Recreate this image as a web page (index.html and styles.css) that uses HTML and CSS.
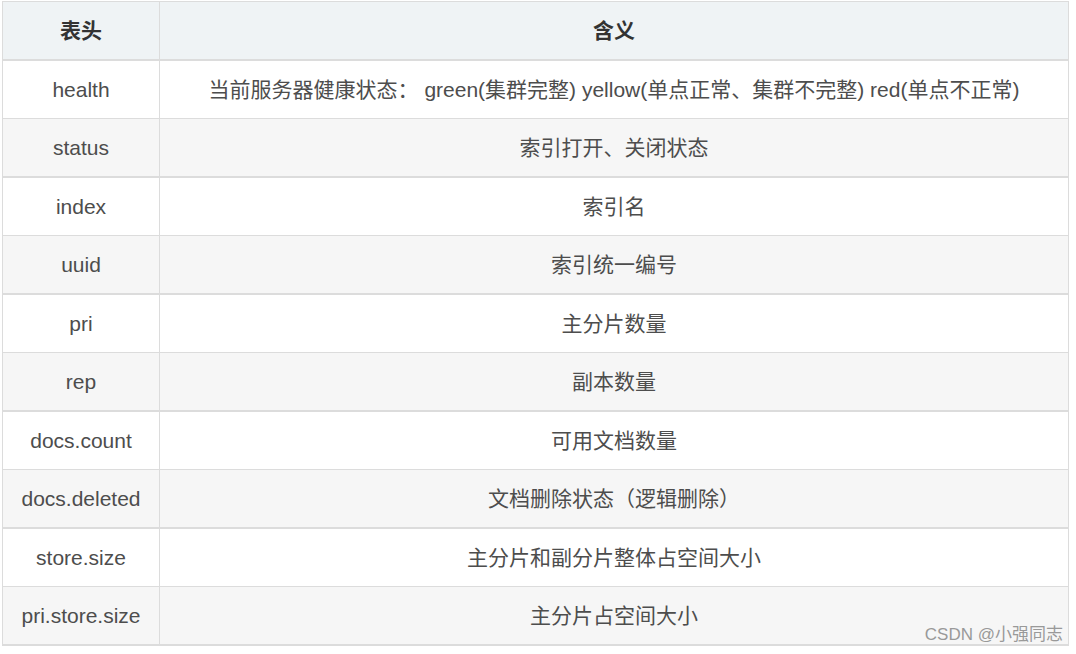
FILE: index.html
```html
<!DOCTYPE html>
<html lang="zh-CN">
<head>
<meta charset="utf-8">
<title>索引字段说明</title>
<link rel="stylesheet" href="styles.css">
</head>
<body>
<div class="page">
  <table class="spec">
    <thead>
      <tr><th class="c-key">表头</th><th class="c-val">含义</th></tr>
    </thead>
    <tbody>
      <tr><td>health</td><td>当前服务器健康状态： green(集群完整) yellow(单点正常、集群不完整) red(单点不正常)</td></tr>
      <tr><td>status</td><td>索引打开、关闭状态</td></tr>
      <tr><td>index</td><td>索引名</td></tr>
      <tr><td>uuid</td><td>索引统一编号</td></tr>
      <tr><td>pri</td><td>主分片数量</td></tr>
      <tr><td>rep</td><td>副本数量</td></tr>
      <tr><td>docs.count</td><td>可用文档数量</td></tr>
      <tr><td>docs.deleted</td><td>文档删除状态（逻辑删除）</td></tr>
      <tr><td>store.size</td><td>主分片和副分片整体占空间大小</td></tr>
      <tr><td>pri.store.size</td><td>主分片占空间大小</td></tr>
    </tbody>
  </table>
  <div class="watermark">CSDN @小强同志</div>
</div>
</body>
</html>
```

FILE: styles.css
```css
html, body {
  margin: 0;
  padding: 0;
  background: #ffffff;
}

body {
  font-family: "Liberation Sans", Arial, "Noto Sans CJK SC", sans-serif;
  color: #4d4d4d;
}

.page {
  position: relative;
  width: 1076px;
  height: 654px;
  padding: 1px 0 0 2px;
  box-sizing: border-box;
}

.spec {
  width: 1067px;
  border-collapse: separate;
  border-spacing: 0;
  border-top: 1px solid #dcdcdc;
  border-left: 1px solid #dcdcdc;
  table-layout: fixed;
  font-size: 21px;
}

.spec th,
.spec td {
  height: 57px;
  padding: 0 16px;
  text-align: center;
  vertical-align: middle;
  border-right: 1px solid #dcdcdc;
  border-bottom: 1px solid #dcdcdc;
  white-space: nowrap;
  line-height: 24px;
  box-sizing: content-box;
}

.spec th {
  background: #eff3f5;
  color: #333333;
  font-weight: bold;
  border-bottom-width: 2px;
}

.spec .c-key,
.spec td:first-child {
  width: 124px;
}

.spec tbody tr:nth-child(2n) td {
  background: #f6f6f6;
  border-bottom-width: 2px;
}

.watermark {
  position: absolute;
  right: 13px;
  top: 624px;
  font-size: 17px;
  line-height: 22px;
  color: #999999;
}
```
